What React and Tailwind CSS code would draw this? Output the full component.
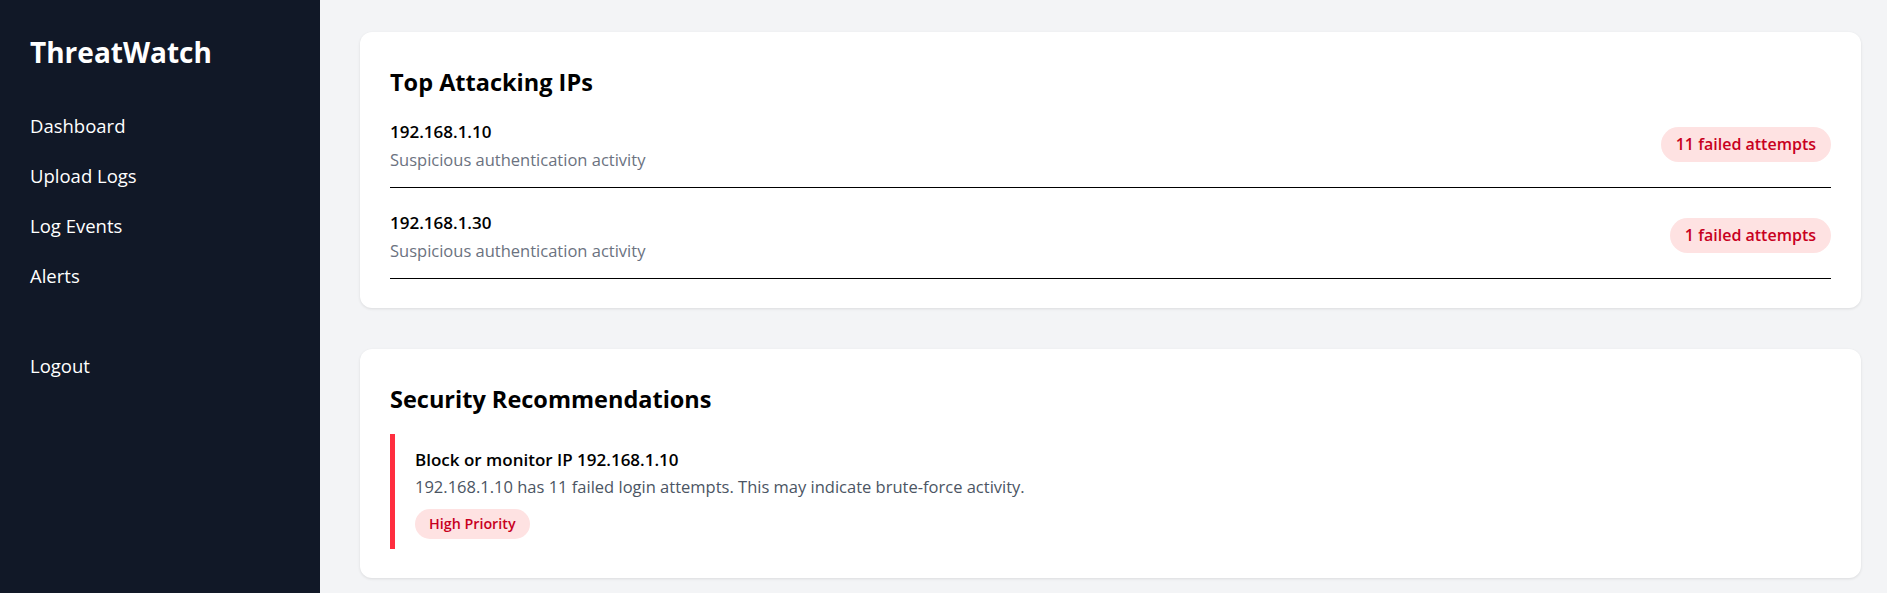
import React from 'react';

const navItems = ['Dashboard', 'Upload Logs', 'Log Events', 'Alerts'];

const attackers = [
  { ip: '192.168.1.10', count: 11 },
  { ip: '192.168.1.30', count: 1 },
];

const Sidebar = () => (
  <aside className="w-[320px] shrink-0 bg-[#111827] text-white px-[30px] pt-[30px]">
    <h1 className="text-[28px] leading-[44px] font-bold">ThreatWatch</h1>
    <nav className="mt-[37px] flex flex-col">
      {navItems.map((item) => (
        <a key={item} href="#" className="text-[18.5px] leading-[30px] mb-[20px]">
          {item}
        </a>
      ))}
      <a href="#" className="mt-[40px] text-[18.5px] leading-[30px]">
        Logout
      </a>
    </nav>
  </aside>
);

const Card = ({ title, children, titleGap }) => (
  <section className="bg-white rounded-xl shadow-[0_1px_3px_rgba(0,0,0,0.1)] px-[30px] pt-[36px] pb-[29px]">
    <h2 className={`text-[23.5px] leading-[28px] font-bold text-black ${titleGap}`}>{title}</h2>
    {children}
  </section>
);

export default function App() {
  return (
    <div
      className="flex min-h-[593px] bg-[#f3f4f6]"
      style={{ fontFamily: '"Open Sans", "Noto Sans", sans-serif' }}
    >
      <Sidebar />

      <main className="flex-1 pl-10 pr-[26px] pt-8 flex flex-col gap-[41px]">
        {/* Top attacking IPs */}
        <Card title="Top Attacking IPs" titleGap="mb-[1px]">
          <div>
            {attackers.map((a) => (
              <div
                key={a.ip}
                className="flex items-center justify-between border-b border-black pt-[23px] pb-[15px]"
              >
                <div>
                  <div className="text-[17px] leading-[24px] font-semibold text-black">{a.ip}</div>
                  <div className="mt-1 text-[16.5px] leading-[24px] text-[#6b7280]">
                    Suspicious authentication activity
                  </div>
                </div>
                <span className="mb-[3px] rounded-full bg-[#fee2e2] text-[#c8001e] text-[16px] leading-[35px] font-semibold px-[15px]">
                  {a.count} failed attempts
                </span>
              </div>
            ))}
          </div>
        </Card>

        {/* Recommendations */}
        <Card title="Security Recommendations" titleGap="mb-[21px]">
          <div className="border-l-[5px] border-[#ff2e3f] pl-[20px] pt-[13px] pb-[10px]">
            <div className="text-[17px] leading-[26px] font-semibold text-black">
              Block or monitor IP 192.168.1.10
            </div>
            <div className="text-[16.5px] leading-[27px] text-[#4b5563]">
              192.168.1.10 has 11 failed login attempts. This may indicate brute-force activity.
            </div>
            <span className="inline-block mt-[9px] rounded-full bg-[#fee2e2] text-[#c8001e] text-[14.3px] leading-[30px] font-semibold px-[14px]">
              High Priority
            </span>
          </div>
        </Card>
      </main>
    </div>
  );
}
